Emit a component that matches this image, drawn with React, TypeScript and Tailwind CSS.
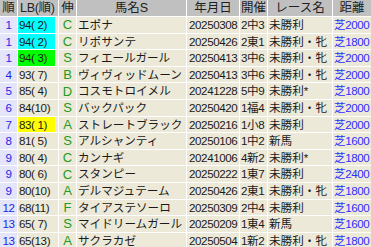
import React from 'react';

type Row = {
    rank: string;
    lb: string;
    lbColor?: string;
    nobi: string;
    name: string;
    date: string;
    kaisai: string;
    race: string;
    dist: string;
};

const ROWS: Row[] = [
    { rank: '1', lb: '94( 2)', lbColor: 'bg-[#00ffff]', nobi: 'C', name: 'エポナ', date: '20250308', kaisai: '2中3', race: '未勝利', dist: '芝2000' },
    { rank: '1', lb: '94( 2)', lbColor: 'bg-[#00ffff]', nobi: 'C', name: 'リポサンテ', date: '20250426', kaisai: '2東1', race: '未勝利・牝', dist: '芝1800' },
    { rank: '1', lb: '94( 3)', lbColor: 'bg-[#00ff00]', nobi: 'S', name: 'フィエールガール', date: '20250413', kaisai: '3中6', race: '未勝利・牝', dist: '芝2000' },
    { rank: '4', lb: '93( 7)', nobi: 'B', name: 'ヴィヴィッドムーン', date: '20250413', kaisai: '3中6', race: '未勝利・牝', dist: '芝2000' },
    { rank: '5', lb: '85( 4)', nobi: 'D', name: 'コスモトロイメル', date: '20241228', kaisai: '5中9', race: '未勝利*', dist: '芝1800' },
    { rank: '6', lb: '84(10)', nobi: 'S', name: 'バックパック', date: '20250420', kaisai: '1福4', race: '未勝利・牝', dist: '芝2000' },
    { rank: '7', lb: '83( 1)', lbColor: 'bg-[#ffff00]', nobi: 'A', name: 'ストレートブラック', date: '20250216', kaisai: '1小8', race: '未勝利', dist: '芝2000' },
    { rank: '8', lb: '81( 5)', nobi: 'S', name: 'アルシャンティ', date: '20250106', kaisai: '1中2', race: '新馬', dist: '芝1600' },
    { rank: '9', lb: '80( 4)', nobi: 'C', name: 'カンナギ', date: '20241006', kaisai: '4新2', race: '未勝利*', dist: '芝1800' },
    { rank: '9', lb: '80( 6)', nobi: 'C', name: 'スタンピー', date: '20250222', kaisai: '1東7', race: '未勝利', dist: '芝2400' },
    { rank: '9', lb: '80(10)', nobi: 'A', name: 'デルマジュテーム', date: '20250426', kaisai: '2東1', race: '未勝利・牝', dist: '芝1800' },
    { rank: '12', lb: '68(11)', nobi: 'F', name: 'タイアステソーロ', date: '20250309', kaisai: '2中4', race: '未勝利', dist: '芝1600' },
    { rank: '13', lb: '65( 7)', nobi: 'S', name: 'マイドリームガール', date: '20250209', kaisai: '1東4', race: '新馬', dist: '芝1600' },
    { rank: '13', lb: '65(13)', nobi: 'A', name: 'サクラカゼ', date: '20250504', kaisai: '1新2', race: '未勝利・牝', dist: '芝1800' },
];

const HEADERS = ['順', 'LB(順)', '伸', '馬名S', '年月日', '開催', 'レース名', '距離'];

const cell = 'flex items-center overflow-hidden whitespace-pre bg-[#ece9d8] text-[#1a1a1a]';

const App: React.FC = () => {
    return (
        <div
            className="w-[371px] h-[247px] overflow-hidden bg-white text-[11.6px] leading-none"
            style={{ fontFamily: '"Liberation Sans", "Noto Sans CJK JP", sans-serif' }}
        >
            <div className="grid grid-cols-[17px_40px_17px_109px_52px_27px_64px_38px] grid-rows-[16px] auto-rows-[15.6px] gap-px bg-white">
                {HEADERS.map((h, i) => (
                    <div
                        key={h}
                        className={`flex items-center overflow-hidden whitespace-nowrap bg-[#c0c0c0] text-[#202020] text-[12.5px] ${
                            i === 1 ? 'justify-start pl-[2px] tracking-[-0.3px]' : 'justify-center'
                        }`}
                    >
                        {h}
                    </div>
                ))}
                {ROWS.map((r, i) => (
                    <React.Fragment key={i}>
                        <div className="flex items-center justify-center bg-[#e4e4fa] text-[#2424e6] tracking-[-0.4px]">{r.rank}</div>
                        <div className={cell}>
                            <span className={`flex h-full w-[37px] items-center pl-px tracking-[-0.4px] ${r.lbColor ?? ''}`}>
                                {r.lb}
                            </span>
                        </div>
                        <div className={`${cell} justify-center text-[13px] !text-[#239a23]`}>{r.nobi}</div>
                        <div className={`${cell} pl-px`}>{r.name}</div>
                        <div className={`${cell} pl-[2px] tracking-[-0.4px]`}>{r.date}</div>
                        <div className={`${cell} pl-px tracking-[-0.4px]`}>{r.kaisai}</div>
                        <div className={`${cell} pl-px`}>{r.race}</div>
                        <div className={`${cell} pl-px tracking-[-0.4px] !text-[#2e2eff]`}>{r.dist}</div>
                    </React.Fragment>
                ))}
            </div>
        </div>
    );
};

export default App;
